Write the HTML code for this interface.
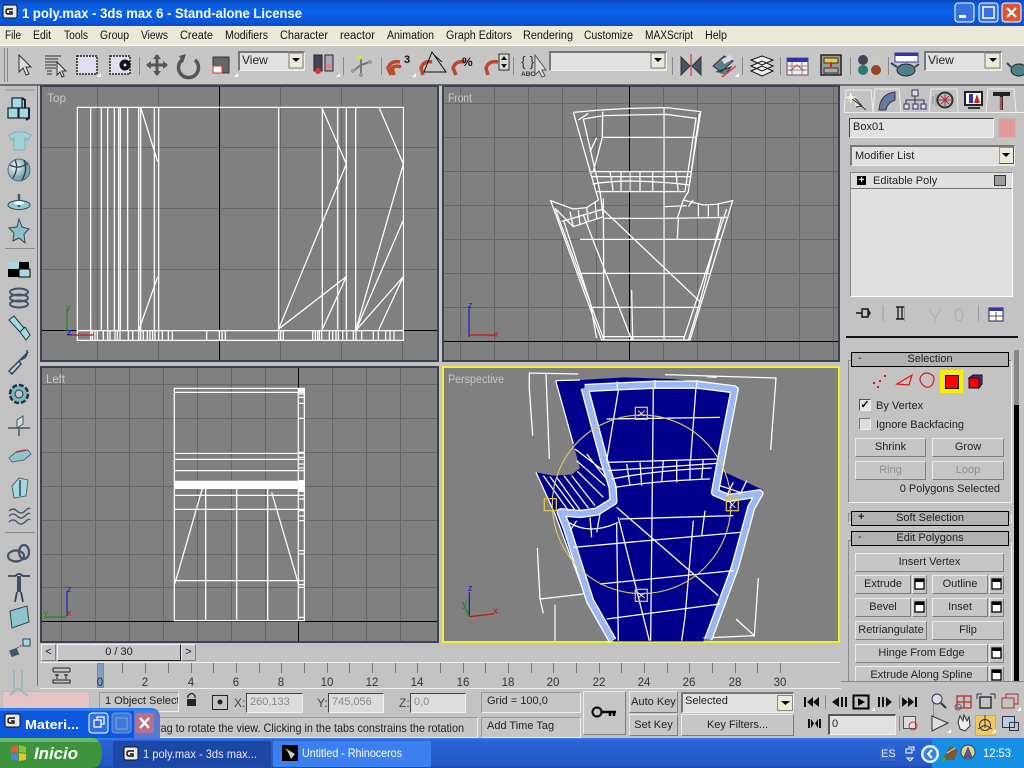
<!DOCTYPE html>
<html><head><meta charset="utf-8"><title>1 poly.max - 3ds max 6</title>
<style>
html,body{margin:0;padding:0;background:#c4c4c4}
#p{position:relative;width:1024px;height:768px;overflow:hidden;background:#c3c3c3;font-family:"Liberation Sans",sans-serif;font-size:11px;color:#111}
#p>div{position:absolute;box-sizing:border-box}
#p>svg{position:absolute;left:0;top:0}
text{font-family:"Liberation Sans",sans-serif}
.b{background:#c6c6c6;border:1px solid;border-color:#ececec #7e7e7e #7e7e7e #ececec;text-align:center;white-space:nowrap;overflow:hidden;line-height:16px;font-size:11px;color:#222}
.d{color:#8d8d8d}
.i{background:#e1e1e1;border:1px solid;border-color:#444 #f2f2f2 #f2f2f2 #444;white-space:nowrap;overflow:hidden;line-height:17px;padding-left:3px;color:#222}
.n{background:#dcdcdc;color:#8a8a8a}
.v{background:#808080;border:2px solid #3d4250}
.r{background:#b2b2b2;border:1px solid #000;text-align:center;line-height:13px;font-size:11px;color:#222}
.g{border:1px solid #8b8b8b;border-right-color:#eee;border-bottom-color:#eee}
.o{background:#c6c6c6;border:1px solid;border-color:#999 #eee #eee #999;line-height:17px;padding-left:5px;white-space:nowrap;overflow:hidden;color:#222;font-size:11px}
.w{fill:none;stroke:#fff;stroke-width:3.8}
.m{font-size:11.5px;fill:#111}
.tl{font-size:13px;fill:#444}
</style></head><body><div id="p">

<div style="left:0;top:0;width:1024px;height:26px;background:linear-gradient(#0a47b8 0,#0a5ce0 5px,#0a63ea 12px,#0a55d8 22px,#0a4cc4 26px)"></div>
<div style="left:0;top:26px;width:1024px;height:20px;background:#ece9d8"></div>
<div style="left:0;top:45px;width:1024px;height:1px;background:#fff"></div>
<div style="left:0;top:46px;width:1024px;height:38px;background:#c6c6c6"></div>
<div style="left:0;top:84px;width:1024px;height:2px;background:#6d6d70"></div>
<div style="left:0;top:86px;width:38px;height:600px;background:#c2c2c2;border-right:1px solid #777"></div>

<div class="v" style="left:40px;top:85px;width:399px;height:277px"></div>
<div class="v" style="left:442px;top:85px;width:398px;height:277px"></div>
<div class="v" style="left:40px;top:366px;width:399px;height:277px"></div>
<div class="v" style="left:442px;top:366px;width:398px;height:277px;border-color:#f5ee2c"></div>

<svg width="1024" height="768" viewBox="0 0 1024 768">
<!-- grids -->
<g stroke="#656565" stroke-width="1" fill="none">
<path d="M97.5 87V360M158.5 87V360M280.5 87V360M341.5 87V360M402.5 87V360M42 147.5H437M42 208.5H437M42 269.5H437"/>
<path d="M460.5 87V360M494.5 87V360M528.5 87V360M562.5 87V360M596.5 87V360M663.5 87V360M697.5 87V360M731.5 87V360M765.5 87V360M799.5 87V360M833.5 87V360M444 103.5H838M444 137.5H838M444 171.5H838M444 205.5H838M444 239.5H838M444 273.5H838M444 307.5H838"/>
<path d="M61.5 368V641M95.5 368V641M129.5 368V641M163.5 368V641M197.5 368V641M231.5 368V641M265.5 368V641M332.5 368V641M366.5 368V641M400.5 368V641M42 384.5H437M42 418.5H437M42 452.5H437M42 486.5H437M42 520.5H437M42 554.5H437M42 587.5H437"/>
</g>
<g stroke="#000" stroke-width="1" fill="none">
<path d="M219.5 87V360M42 330.5H437M629.5 87V360M444 341.5H838M298.5 368V641M42 621.5H437"/>
</g>

<!-- TOP -->
<g transform="translate(40,85) scale(.33333)" class="w">
<path d="M112 67H1090V766H112ZM112 737H1090"/>
<path d="M152 67V766M184 67V737M203 67V737M223 67V737M236 67V737M241 67V737M263 67V737M296 67V737M302 67V737M343 67V737M356 67V737M716 67V737M847 67V737M893 67V737M919 67V737M947 67V737"/>
<path d="M157 737V766M165 737V766M172 737V766M190 737V766M203 737V766M210 737V766M225 737V766M232 737V766M240 737V766M265 737V766M278 737V766M296 737V766M302 737V766M310 737V766M322 737V766M330 737V766M338 737V766M345 737V766M356 737V766M367 737V766M385 737V766M397 737V766M500 737V766M538 737V766M546 737V766M556 737V766M716 737V766M722 737V766M730 737V766M818 737V766M826 737V766M833 737V766M838 737V766M845 737V766M868 737V766M878 737V766M888 737V766M895 737V766M908 737V766M920 737V766M940 737V766M948 737V766M965 737V766M1000 737V766M1015 737V766M1037 737V766M1050 737V766M1062 737V766"/>
<path d="M302 67L353 230M296 737L353 575M845 67L919 237L716 732L919 575M845 737L919 575M1017 67L1090 237L947 737L1090 405M947 737L1090 575M1015 737L1090 575"/>
</g>
<g font-size="12">
<path d="M67 332V309" stroke="#1c8a1c" stroke-width="1.2"/><path d="M67 335H94" stroke="#c01818" stroke-width="1.2"/>
<text x="66" y="310" fill="#1c8a1c" font-size="9">y</text><text x="67" y="335" fill="#2020c0" font-size="9" font-weight="bold">z</text>
</g>

<!-- FRONT -->
<g transform="translate(440,85) scale(.33333)" class="w">
<path d="M400 82L480 75L570 70L680 68L782 80L745 320L730 345L790 360L830 358L878 347L750 765H485L332 347L400 372L440 368L475 345L400 82"/>
<path d="M430 102L490 92L570 90L680 88L768 100L735 320M430 102L480 320L490 395M778 85L750 290M415 105L445 85M488 80L487 157L460 260M450 200L470 158"/>
<path d="M487 157H770M447 260H753M455 275H750M458 297Q570 278 750 300M470 320H735"/>
<path d="M510 260L520 320M543 260V320M570 260V320M600 260V320M638 260V320M672 260V320M707 260L715 320"/>
<path d="M345 370L400 425L490 395M365 410L490 372M390 380L400 425M415 375L420 420M440 365L445 410M465 350L470 400M730 345L712 400M745 365L760 345M775 358V395M805 362V395M835 355V395"/>
<path d="M345 370L490 760M370 405L450 650L470 760M860 372L730 765M845 395L780 650L745 765"/>
<path d="M490 400H570L675 400L865 397M675 365L740 362M420 463H840M410 565H808M455 667H780M490 755H735"/>
<path d="M490 340L492 765M672 70V765M575 615L578 765M485 370L780 650M430 390L575 765M715 400L712 463"/>
</g>
<path d="M469 337V306" stroke="#2020c0" stroke-width="1.2"/><path d="M469 335H495" stroke="#c01818" stroke-width="1.2"/>
<text x="468" y="308" fill="#2020c0" font-size="9">z</text><text x="494" y="337" fill="#c01818" font-size="9">x</text>

<!-- LEFT -->
<g transform="translate(40,364) scale(.33333)" class="w">
<path d="M403 73H793V770H403ZM403 85H793M403 268H793M403 286H793M403 320H793M403 352H793M403 360H793M403 394H793M403 436H793M403 650H793"/>
<path d="M775 73V770M497 352V770M590 352V770M683 352V770"/>
<path d="M488 370L405 658M695 385L775 658"/>
<path d="M775 90H793M775 100H793M775 118H793M775 163H793M775 265H793M775 280H793M775 300H793M775 312H793M775 405H793M775 440H793M775 456H793M775 470H793M775 560H793M775 570H793M775 662H793M775 670H793M775 760H793"/>
</g>
<rect x="174" y="481" width="131" height="8" fill="#fff"/>
<rect x="298" y="388" width="7" height="5" fill="#fff"/><rect x="298" y="480" width="7" height="12" fill="#fff"/>
<path d="M67 616V591" stroke="#2020c0" stroke-width="1.2"/><path d="M67 617H44" stroke="#1c8a1c" stroke-width="1.2"/>
<text x="67" y="592" fill="#2020c0" font-size="9">z</text><text x="44" y="616" fill="#1c8a1c" font-size="9">y</text><text x="67" y="616" fill="#c01818" font-size="9">x</text>

<!-- PERSPECTIVE -->
<g transform="translate(440,364) scale(.33333)">
<path d="M347 50L420 48L555 40L695 45L895 65L870 135L840 318L970 378L930 430L835 720L790 832H520L430 680L345 450L288 325L340 335L395 332L420 312L400 240Z" fill="#00008c"/>
<g class="w">
<path d="M268 75V27L415 30M268 75L278 215M318 30L328 285M675 32L1008 42L992 258M800 38L830 40M292 552L300 705L430 690M300 705L310 748M345 722V830M955 642L943 815L888 765M943 815L790 822"/>
<path d="M347 50L400 240M347 50L420 48"/>
<path d="M288 325L345 450L430 680"/>
</g>
<g fill="none" stroke-linejoin="round">
<path id="band" d="M434 72L560 66L645 62L770 62L884 76L852 240L825 385L865 402L958 388L934 430L885 610L805 825M434 72L495 300L518 370L520 412L470 443L420 450L362 445L380 490L450 710L518 830" stroke="#fff" stroke-width="25"/>
<path d="M434 72L560 66L645 62L770 62L884 76L852 240L825 385L865 402L958 388L934 430L885 610L805 825M434 72L495 300L518 370L520 412L470 443L420 450L362 445L380 490L450 710L518 830" stroke="#9cb8f2" stroke-width="17"/>
</g>
<g class="w">
<path d="M532 52V80M645 48V75M770 48V73"/>
<path d="M535 80L500 290M640 75L632 830M768 70L752 285M500 165L840 160M500 295L830 285M505 320L830 298M515 345Q640 320 815 312M525 370Q650 350 810 345M560 300L570 365M600 295L605 365M670 290L665 355M710 290V355M750 285V350M790 285L785 345"/>
<path d="M310 335L385 440M330 338L405 438M350 340L420 438M372 335L445 432M395 335L465 425M412 322L490 400M405 255L490 320M410 290L495 365M440 270L495 340M840 365L900 385M880 355L860 395M920 350L900 392"/>
<path d="M540 465L880 455M385 475Q450 515 535 475M400 550L900 505M480 660L880 620M500 765L840 720M390 500L410 470M450 460L455 520M480 450L470 505M530 430L835 695M535 460L628 830M760 470L735 760L725 830M530 480L535 830M795 440L785 515"/>
</g>
<circle cx="605" cy="421" r="268" fill="none" stroke="#d8c868" stroke-width="3.5"/>
<g fill="none" stroke="#d8c050" stroke-width="4">
<rect x="586" y="130" width="36" height="36"/><rect x="586" y="676" width="36" height="36"/><rect x="313" y="404" width="36" height="36"/><rect x="859" y="404" width="36" height="36"/>
</g>
<path d="M594 140L614 156M614 140L594 156M594 686L614 702M614 686L594 702M868 412L886 432M886 412L868 432" stroke="#fff" stroke-width="2.5"/>
<path d="M88 758V685" stroke="#2020c0" stroke-width="4"/><path d="M88 758L160 750" stroke="#c01818" stroke-width="4"/><path d="M88 758L68 715" stroke="#1c8a1c" stroke-width="4"/>
</g>
<text x="468" y="591" fill="#2020c0" font-size="9">z</text><text x="462" y="607" fill="#1c8a1c" font-size="10">y</text><text x="493" y="614" fill="#c01818" font-size="10">x</text>

<!-- viewport labels -->
<g font-size="11.5" fill="#c6c6c6">
<text x="47" y="102" textLength="19" lengthAdjust="spacingAndGlyphs">Top</text>
<text x="448" y="102" textLength="24" lengthAdjust="spacingAndGlyphs">Front</text>
<text x="46" y="383" textLength="19" lengthAdjust="spacingAndGlyphs">Left</text>
<text x="448" y="383" textLength="56" lengthAdjust="spacingAndGlyphs">Perspective</text>
</g>

<!-- title -->
<g>
<rect x="3" y="5" width="14" height="13" rx="2" fill="#e8e8e8" stroke="#111"/><path d="M13 9H8Q6 9 6 11.5T8 14H12V12H9" fill="none" stroke="#111" stroke-width="1.4"/>
<text x="22" y="18" fill="#fff" font-weight="bold" font-size="13.5" textLength="280" lengthAdjust="spacingAndGlyphs">1 poly.max - 3ds max 6 - Stand-alone License</text>
<rect x="955" y="3" width="19" height="19" rx="3" fill="#3a6fe0" stroke="#fff"/><rect x="959" y="15" width="7" height="3" fill="#fff"/>
<rect x="979" y="3" width="19" height="19" rx="3" fill="#3a6fe0" stroke="#fff"/><rect x="983" y="7" width="11" height="11" fill="none" stroke="#fff" stroke-width="1.5"/>
<rect x="1002" y="3" width="19" height="19" rx="3" fill="#dd5533" stroke="#fff"/><path d="M1007 8L1016 17M1016 8L1007 17" stroke="#fff" stroke-width="2.2"/>
</g>
<!-- menu -->
<g class="x">
<text class="m" x="5" y="39" textLength="16" lengthAdjust="spacingAndGlyphs">File</text>
<text class="m" x="33" y="39" textLength="18" lengthAdjust="spacingAndGlyphs">Edit</text>
<text class="m" x="64" y="39" textLength="24" lengthAdjust="spacingAndGlyphs">Tools</text>
<text class="m" x="100" y="39" textLength="29" lengthAdjust="spacingAndGlyphs">Group</text>
<text class="m" x="141" y="39" textLength="27" lengthAdjust="spacingAndGlyphs">Views</text>
<text class="m" x="180" y="39" textLength="33" lengthAdjust="spacingAndGlyphs">Create</text>
<text class="m" x="225" y="39" textLength="43" lengthAdjust="spacingAndGlyphs">Modifiers</text>
<text class="m" x="280" y="39" textLength="48" lengthAdjust="spacingAndGlyphs">Character</text>
<text class="m" x="340" y="39" textLength="35" lengthAdjust="spacingAndGlyphs">reactor</text>
<text class="m" x="387" y="39" textLength="47" lengthAdjust="spacingAndGlyphs">Animation</text>
<text class="m" x="446" y="39" textLength="66" lengthAdjust="spacingAndGlyphs">Graph Editors</text>
<text class="m" x="523" y="39" textLength="50" lengthAdjust="spacingAndGlyphs">Rendering</text>
<text class="m" x="584" y="39" textLength="49" lengthAdjust="spacingAndGlyphs">Customize</text>
<text class="m" x="645" y="39" textLength="48" lengthAdjust="spacingAndGlyphs">MAXScript</text>
<text class="m" x="705" y="39" textLength="22" lengthAdjust="spacingAndGlyphs">Help</text>
</g>
</svg>

<!-- Right panel -->
<div style="left:841px;top:86px;width:183px;height:600px;background:#c3c3c3"></div>
<div style="left:844px;top:112px;width:180px;height:1px;background:#eee"></div>
<div class="i" style="left:849px;top:118px;width:145px;height:20px">Box01</div>
<div style="left:998px;top:118px;width:18px;height:20px;background:#e59a9a;border:1px solid #bbb"></div>
<div class="i" style="left:850px;top:145px;width:165px;height:21px;padding-left:3px;line-height:18px;border-width:2px 1px 1px 2px;border-color:#777 #eee #eee #777">Modifier List</div>
<div style="left:999px;top:147px;width:15px;height:17px;background:#ece9d8;border:1px solid #999;border-right-color:#555;border-bottom-color:#555"></div>
<div style="left:850px;top:172px;width:163px;height:125px;background:#e0e0e0;border:1px solid;border-color:#888 #fff #fff #888"></div>
<div style="left:851px;top:188px;width:161px;height:1px;background:#777"></div>
<div style="left:873px;top:173px;height:15px;line-height:16px;font-size:11px;color:#222">Editable Poly</div>
<div style="left:994px;top:175px;width:12px;height:11px;background:#9c9c9c;border:1px solid #333"></div>
<div style="left:857px;top:176px;width:9px;height:9px;background:#000;color:#fff;font:bold 10px/9px 'Liberation Sans';text-align:center">+</div>
<div style="left:846px;top:336px;width:172px;height:2px;background:#111"></div>

<!-- rollouts -->
<div style="left:1014px;top:350px;width:5px;height:55px;background:#888"></div>
<div style="left:1014px;top:405px;width:5px;height:276px;background:#000"></div>
<div class="g" style="left:848px;top:360px;width:164px;height:143px"></div>
<div class="r" style="left:851px;top:352px;width:158px;height:15px"><span style="position:absolute;left:6px;top:-1px">-</span>Selection</div>
<div style="left:940px;top:370px;width:23px;height:23px;background:#f8f000"></div>
<div style="left:945px;top:375px;width:14px;height:14px;background:#f00;border:1px solid #000"></div>
<div style="left:859px;top:399px;width:12px;height:12px;background:#e4e4e4;border:1px solid;border-color:#555 #eee #eee #555;font:bold 11px/10px 'Liberation Sans';text-align:center;color:#000">&#10003;</div>
<div style="left:876px;top:399px;line-height:14px;color:#222">By Vertex</div>
<div style="left:859px;top:418px;width:12px;height:12px;background:#dcdcdc;border:1px solid;border-color:#777 #eee #eee #777"></div>
<div style="left:876px;top:418px;line-height:14px;color:#222">Ignore Backfacing</div>
<div class="b" style="left:855px;top:438px;width:71px;height:19px">Shrink</div>
<div class="b" style="left:932px;top:438px;width:72px;height:19px">Grow</div>
<div class="b d" style="left:855px;top:461px;width:71px;height:19px">Ring</div>
<div class="b d" style="left:932px;top:461px;width:72px;height:19px">Loop</div>
<div style="left:860px;top:482px;width:140px;text-align:right;line-height:14px;color:#222">0 Polygons Selected</div>
<div class="g" style="left:848px;top:513px;width:164px;height:10px"></div>
<div class="r" style="left:851px;top:511px;width:158px;height:15px"><span style="position:absolute;left:6px;top:-1px;font-weight:bold">+</span>Soft Selection</div>
<div class="g" style="left:848px;top:540px;width:164px;height:146px;border-bottom:0"></div>
<div class="r" style="left:851px;top:531px;width:158px;height:15px"><span style="position:absolute;left:6px;top:-1px">-</span>Edit Polygons</div>
<div class="b" style="left:855px;top:553px;width:149px;height:19px">Insert Vertex</div>
<div class="b" style="left:855px;top:575px;width:56px;height:19px">Extrude</div>
<div class="b" style="left:912px;top:575px;width:15px;height:19px"></div>
<div class="b" style="left:932px;top:575px;width:56px;height:19px">Outline</div>
<div class="b" style="left:989px;top:575px;width:15px;height:19px"></div>
<div class="b" style="left:855px;top:598px;width:56px;height:19px">Bevel</div>
<div class="b" style="left:912px;top:598px;width:15px;height:19px"></div>
<div class="b" style="left:932px;top:598px;width:56px;height:19px">Inset</div>
<div class="b" style="left:989px;top:598px;width:15px;height:19px"></div>
<div class="b" style="left:855px;top:621px;width:72px;height:19px">Retriangulate</div>
<div class="b" style="left:932px;top:621px;width:72px;height:19px">Flip</div>
<div class="b" style="left:855px;top:644px;width:133px;height:19px">Hinge From Edge</div>
<div class="b" style="left:989px;top:644px;width:15px;height:19px"></div>
<div class="b" style="left:855px;top:666px;width:133px;height:19px">Extrude Along Spline</div>
<div class="b" style="left:989px;top:666px;width:15px;height:19px"></div>
<div style="left:841px;top:681px;width:183px;height:8px;background:#c3c3c3;border-top:1px solid #888"></div>

<!-- toolbar dropdowns -->
<div class="i" style="left:238px;top:51px;width:67px;height:20px;border-width:2px 1px 1px 2px;border-color:#777 #eee #eee #777;line-height:15px;padding-left:2px;font-size:12px">View</div>
<div class="i" style="left:549px;top:51px;width:118px;height:20px;border-width:2px 1px 1px 2px;border-color:#777 #eee #eee #777"></div>
<div class="i" style="left:924px;top:51px;width:78px;height:20px;border-width:2px 1px 1px 2px;border-color:#777 #eee #eee #777;line-height:15px;padding-left:2px;font-size:12px">View</div>

<!-- time slider -->
<div class="b" style="left:41px;top:644px;width:15px;height:17px;line-height:14px">&lt;</div>
<div class="b" style="left:57px;top:644px;width:124px;height:17px;line-height:15px;border-color:#eee #222 #222 #eee">0 / 30</div>
<div class="b" style="left:181px;top:644px;width:15px;height:17px;line-height:14px">&gt;</div>
<div style="left:40px;top:662px;width:800px;height:1px;background:#eee"></div>
<div style="left:97px;top:663px;width:7px;height:25px;background:#7f9fc4;border:1px solid #888"></div>
<div style="left:40px;top:688px;width:801px;height:1px;background:#eee"></div>

<!-- status -->
<div style="left:2px;top:691px;width:88px;height:20px;background:#e4c4c4;border:1px solid #bbb"></div>
<div class="o" style="left:99px;top:692px;width:80px;height:20px">1 Object Selected</div>
<div class="i n" style="left:246px;top:693px;width:57px;height:20px">260,133</div>
<div class="i n" style="left:328px;top:693px;width:56px;height:20px">745,056</div>
<div class="i n" style="left:410px;top:693px;width:56px;height:20px">0,0</div>
<div class="o" style="left:481px;top:692px;width:100px;height:21px">Grid = 100,0</div>
<div class="o" style="left:99px;top:717px;width:379px;height:21px"></div>
<div class="o" style="left:481px;top:717px;width:100px;height:21px">Add Time Tag</div>
<div class="b" style="left:583px;top:691px;width:43px;height:44px"></div>
<div class="b" style="left:629px;top:691px;width:49px;height:22px;line-height:20px;padding:0">Auto Key</div>
<div class="b" style="left:629px;top:714px;width:49px;height:22px;line-height:20px">Set Key</div>
<div class="i" style="left:681px;top:692px;width:113px;height:21px;border-width:2px 1px 1px 2px;border-color:#777 #eee #eee #777;line-height:15px;padding-left:2px">Selected</div>
<div style="left:777px;top:695px;width:16px;height:16px;background:#ece9d8;border:1px solid #888"></div>
<div class="b" style="left:681px;top:714px;width:113px;height:22px;line-height:20px">Key Filters...</div>
<div class="i" style="left:828px;top:714px;width:68px;height:21px;border-width:2px 1px 1px 2px;border-color:#555 #eee #eee #555;line-height:17px;padding-left:2px">0</div>
<div style="left:975px;top:715px;width:21px;height:21px;background:#f0c860;border:1px solid #aaa"></div>

<!-- icons overlay -->
<svg width="1024" height="768" viewBox="0 0 1024 768">
<defs>
<linearGradient id="tb" x1="0" x2="0" y1="0" y2="1"><stop offset="0" stop-color="#3a7cf0"/><stop offset=".1" stop-color="#2a62d4"/><stop offset=".9" stop-color="#2457c4"/><stop offset="1" stop-color="#1e49a8"/></linearGradient>
<radialGradient id="ball" cx=".35" cy=".35"><stop offset="0" stop-color="#fff"/><stop offset="1" stop-color="#79a8b0"/></radialGradient>
</defs>
<!-- toolbar grips & separators -->
<path d="M4.5 48V82M7.5 48V82" stroke="#888"/>
<path d="M139.5 57V75M343.5 57V75M381.5 57V75M513.5 57V75M672.5 57V75M742.5 57V75M780.5 57V75M850.5 57V75M888.5 57V75" stroke="#888"/>
<!-- cursor -->
<path d="M19 55V72L23 68L26 75L29 74L26 67H31Z" fill="#ddd" stroke="#333"/>
<path d="M45 56H61M45 59H58M45 62H58M45 65H56M45 68H56M47 71H52M47 74H52" stroke="#333"/><path d="M57 62V75L60 72L62 77L64 76L62 71H66Z" fill="#ddd" stroke="#333"/>
<rect x="77" y="56" width="20" height="18" fill="#dfdff0" stroke="#222" stroke-dasharray="2 1" stroke-width="1.5"/>
<rect x="110" y="56" width="20" height="18" fill="#dfdff0" stroke="#222" stroke-dasharray="2 1" stroke-width="1.5"/><circle cx="125" cy="65" r="5.5" fill="#111"/><circle cx="125" cy="65" r="1.5" fill="#ddd"/>
<path d="M157 55V75M147 65H167" stroke="#555" stroke-width="3"/><path d="M157 54L153 59H161ZM157 76L153 71H161ZM146 65L151 61V69ZM168 65L163 61V69Z" fill="#555"/>
<path d="M195 60A10 10 0 1 1 182 60" fill="none" stroke="#555" stroke-width="3.5"/><path d="M186 54L179 56L183 63Z" fill="#555"/>
<rect x="213" y="57" width="16" height="16" fill="#666" stroke="#333"/><rect x="213" y="66" width="9" height="7" fill="#fff" stroke="#c33"/>
<rect x="314" y="55" width="8" height="16" fill="#445" stroke="#222"/><rect x="325" y="55" width="8" height="16" fill="#aab" stroke="#222"/><circle cx="318" cy="71" r="3" fill="#d33"/><circle cx="329" cy="66" r="3" fill="#d88"/>
<path d="M361 65V58M361 65L353 71M361 65L370 62M361 65L361 75" stroke="#777" stroke-width="2"/><circle cx="360" cy="57" r="2.5" fill="#dd4"/><circle cx="353" cy="71" r="2" fill="#999"/><circle cx="370" cy="62" r="2" fill="#999"/><circle cx="361" cy="75" r="2" fill="#999"/>
<g fill="none" stroke="#b84a30" stroke-width="3.5"><path d="M391 75L388 68Q391 60 400 62"/><path d="M394 75L392 68Q396 65 401 67"/><path d="M423 75L421 68Q424 60 432 62"/><path d="M456 75L453 68Q456 60 465 62"/><path d="M488 75L486 68Q489 60 498 62"/></g>
<text x="404" y="63" font-weight="bold" font-size="11" fill="#111">3</text>
<path d="M424 72L432 52L446 72ZM434 55L442 62" fill="none" stroke="#111"/>
<text x="462" y="66" font-weight="bold" font-size="12" fill="#111">%</text>
<rect x="499" y="54" width="10" height="16" fill="#ddd" stroke="#333"/><path d="M504 56L501 60H507ZM504 68L501 64H507Z" fill="#111"/>
<text x="521" y="66" font-size="14" fill="#333">{ }</text><text x="521" y="76" font-size="6.5" font-weight="bold" fill="#333">ABC</text><path d="M535 55V75L539 71L542 77L545 76L542 70H546Z" fill="#ddd" stroke="#555"/>
<path d="M681 57L690 66L681 75ZM701 57L692 66L701 75Z" fill="#445566" stroke="#333"/><path d="M691 54V76" stroke="#c55" stroke-width="1.5"/>
<path d="M713 66L724 56L733 61L721 72ZM716 72L731 67L725 75" fill="#5a7f88" stroke="#333"/><path d="M722 77L736 66" stroke="#d44" stroke-width="1.5"/><rect x="722" y="57" width="10" height="5" fill="#ddd" transform="rotate(-30 727 59)"/>
<path d="M751 60L762 56L773 60L762 65ZM751 66L762 61L773 66L762 71ZM751 71L762 66L773 71L762 76Z" fill="#eee" stroke="#111"/>
<rect x="787" y="58" width="21" height="17" fill="#f0f0f0" stroke="#556"/><rect x="787" y="58" width="21" height="4" fill="#33a"/><path d="M792 62V75M802 62V75M787 66H808M787 70H808" stroke="#888"/><path d="M790 71L797 65L804 71" stroke="#c44" fill="none"/>
<rect x="821" y="55" width="20" height="20" fill="#999" stroke="#222" stroke-width="1.5"/><rect x="824" y="58" width="14" height="5" fill="#e8cc30" stroke="#333"/><rect x="824" y="68" width="14" height="5" fill="#aaa" stroke="#333"/><path d="M831 62V67" stroke="#c22" stroke-width="2"/>
<circle cx="863" cy="60" r="5" fill="#445"/><circle cx="876" cy="60" r="5" fill="#ccc"/><circle cx="863" cy="70" r="5" fill="#2a7a70"/><circle cx="876" cy="70" r="5" fill="#942"/>
<rect x="895" y="53" width="23" height="9" fill="#fff" stroke="#33a"/><rect x="895" y="53" width="23" height="3" fill="#33a"/><ellipse cx="906" cy="70" rx="9" ry="6" fill="#4f7f8a" stroke="#222"/><path d="M897 67L891 63M915 67L919 64" stroke="#345" stroke-width="2"/>
<ellipse cx="1019" cy="70" rx="8" ry="6" fill="#4f7f8a" stroke="#222"/><path d="M1011 67L1007 63" stroke="#345" stroke-width="2"/>
<!-- dropdown arrows -->
<g>
<rect x="289" y="53" width="14" height="15" fill="#ece9d8" stroke="#777"/><path d="M292 58H300L296 62Z" fill="#000"/>
<rect x="651" y="53" width="14" height="15" fill="#ece9d8" stroke="#777"/><path d="M654 58H662L658 62Z" fill="#000"/>
<rect x="985" y="53" width="15" height="15" fill="#ece9d8" stroke="#777"/><path d="M989 58H997L993 62Z" fill="#000"/>
<path d="M1002 153H1010L1006 157Z" fill="#000"/>
<path d="M781 701H790L785.500 705Z" fill="#000"/>
</g>
<!-- small corner flyout marks -->
<path d="M97 77H101V73ZM234 77H238V73ZM336 77H340V73ZM412 77H416V73ZM735 77H739V73Z" fill="#fff"/>

<!-- left toolbar -->
<path d="M5 90H35M5 248.500H35M5 532.500H35" stroke="#888"/>
<g stroke="#123" stroke-width="1.2">
<rect x="12" y="98" width="10" height="10" fill="#a5dbe0"/><rect x="8" y="108" width="10" height="10" fill="#a5dbe0"/><rect x="19" y="108" width="10" height="10" fill="#a5dbe0"/>
<path d="M22 98L25 100V108M29 108V118L26 120" fill="none" stroke-width="2"/>
</g>
<path d="M9 135L15 132H24L31 135L28 140L25 138V150H14V138L11 140Z" fill="#a0d2d8" stroke="#8ab"/>
<circle cx="19" cy="170" r="11" fill="url(#ball)" stroke="#667"/><path d="M10 165Q19 170 28 163M13 178Q19 168 15 160M22 180Q28 170 24 160" fill="none" stroke="#345" stroke-width="1.4"/>
<ellipse cx="19" cy="205" rx="11" ry="4.500" fill="#8fcad2" stroke="#345"/><path d="M19 194V207" stroke="#456" stroke-width="2.500"/><ellipse cx="19" cy="203" rx="5" ry="2" fill="#dff"/>
<path d="M19 219L22 227L29 229L24 234L25 243L19 238L13 241L14 233L9 228L17 227Z" fill="#8cc0c8" stroke="#345"/>
<rect x="9" y="262" width="20" height="15" fill="#a5dbe0"/><rect x="9" y="262" width="10" height="7" fill="#a5dbe0"/><rect x="19" y="262" width="10" height="7" fill="#000"/><rect x="8" y="269" width="11" height="8" fill="#000"/><rect x="19" y="269" width="11" height="8" fill="#a5dbe0" stroke="#000"/>
<g fill="none" stroke="#456" stroke-width="2"><ellipse cx="19" cy="292" rx="9" ry="3.500"/><ellipse cx="19" cy="298" rx="9" ry="3.500"/><ellipse cx="19" cy="304" rx="9" ry="3.500"/></g>
<path d="M9 320L14 316L24 328L20 332ZM20 332L25 327L30 335L26 340Z" fill="#a5dbe0" stroke="#234"/>
<path d="M9 371L19 361L21 364L12 374ZM19 361L28 352M20 360Q28 358 27 350" fill="#a5dbe0" stroke="#345" stroke-width="1.500"/>
<circle cx="19" cy="394" r="9" fill="#7fb8c2" stroke="#234" stroke-width="2.500" stroke-dasharray="5 2"/><circle cx="19" cy="394" r="4" fill="#c3c3c3" stroke="#234"/>
<path d="M8 428H30M19 428V436" stroke="#456" stroke-width="1.500"/><path d="M17 428V420L23 416V424Z" fill="#ddd" stroke="#456"/>
<path d="M9 458L16 452L28 450L31 454L24 460L12 462Z" fill="#8fc4cc" stroke="#667"/><path d="M16 452L26 450" stroke="#a33" stroke-width="1.500"/>
<path d="M12 486L19 478L28 480L26 496L14 498Z" fill="#a5dbe0" stroke="#567"/><path d="M20 480V496" stroke="#345" stroke-width="1.500"/>
<g fill="none" stroke="#456" stroke-width="1.300"><path d="M9 511Q13 507 17 511T25 511T30 509M9 516Q13 512 17 516T25 516T30 514M9 522Q13 518 17 522T25 522T30 520"/></g>
<g fill="none" stroke="#456" stroke-width="2.200"><ellipse cx="16" cy="556" rx="8" ry="5.500"/><ellipse cx="24" cy="552" rx="5" ry="7"/></g>
<path d="M8 576H15L18 574L20 574L23 576H30M18 576V592M20 576V592M17 592L15 602M21 592L23 602" fill="none" stroke="#345" stroke-width="1.800"/>
<path d="M10 611L27 606L29 622L12 628Z" fill="#8ec4cc" stroke="#345"/>
<rect x="10" y="649" width="8" height="7" fill="#456" transform="rotate(-20 14 652)"/><rect x="23" y="639" width="7" height="7" fill="#a5dbe0" stroke="#345"/><path d="M17 648L24 644" stroke="#555" stroke-dasharray="2 1"/>
<path d="M14 670V690M22 670V690M10 695L18 688L28 696" fill="none" stroke="#9bb" stroke-width="2"/>
<!-- track bar icon -->
<rect x="53" y="668" width="17" height="4" rx="1" fill="none" stroke="#222"/><rect x="53" y="680" width="17" height="3" fill="none" stroke="#222"/><path d="M57 679V674M66 679V674M55 675H59M64 675H68" stroke="#222"/>
<!-- timeline ticks -->
<g stroke="#777">
<path d="M122.500 663V673M145.500 663V673M168.500 663V673M191.500 663V673M213.500 663V673M236.500 663V673M259.500 663V673M281.500 663V673M304.500 663V673M327.500 663V673M349.500 663V673M372.500 663V673M395.500 663V673M417.500 663V673M440.500 663V673M463.500 663V673M485.500 663V673M508.500 663V673M531.500 663V673M553.500 663V673M576.500 663V673M599.500 663V673M621.500 663V673M644.500 663V673M667.500 663V673M689.500 663V673M712.500 663V673M735.500 663V673M757.500 663V673M780.500 663V673"/>
</g>
<g font-size="11.500" fill="#333" text-anchor="middle">
<text x="100" y="686">0</text><text x="145" y="686">2</text><text x="191" y="686">4</text><text x="236" y="686">6</text><text x="281" y="686">8</text><text x="327" y="686">10</text><text x="372" y="686">12</text><text x="417" y="686">14</text><text x="463" y="686">16</text><text x="508" y="686">18</text><text x="553" y="686">20</text><text x="599" y="686">22</text><text x="644" y="686">24</text><text x="689" y="686">26</text><text x="735" y="686">28</text><text x="780" y="686">30</text>
</g>
<!-- status icons -->
<path d="M188 698V696Q192 691 195 696V698" fill="none" stroke="#222" stroke-width="1.300"/><rect x="187" y="699" width="9" height="7" fill="#222"/>
<rect x="212.500" y="695.500" width="15" height="14" fill="none" stroke="#222"/><circle cx="220" cy="702" r="2.500" fill="#222"/>
<g fill="#444" font-size="12"><text x="234" y="707">X:</text><text x="317" y="707">Y:</text><text x="399" y="707">Z:</text></g>
<!-- key icon -->
<circle cx="597" cy="712" r="4.500" fill="none" stroke="#000" stroke-width="2"/><path d="M602 712H616M610 712V716M614 712V716" stroke="#000" stroke-width="2.500"/>
<!-- playback -->
<g fill="#111">
<path d="M804 697H806V707H804ZM813 697V707L807 702ZM819 697V707L813 702Z"/>
<path d="M839 697V707L832 702ZM841 697H843V707H841ZM845 697H847V707H845Z"/>
<path d="M878 697H880V707H878ZM882 697H884V707H882ZM886 697L892 702L886 707Z"/>
<path d="M902 697L908 702L902 707ZM908 697L914 702L908 707ZM915 697H917V707H915Z"/>
<path d="M808 719H810V728H808ZM811 719L814 723.500L811 728ZM818 719V728L815 723.500ZM819 719H821V728H819Z"/>
</g>
<rect x="853.500" y="695.500" width="15" height="13" fill="none" stroke="#000" stroke-width="2"/><path d="M858 698L865 702L858 706Z" fill="#000"/>
<path d="M825.500 695V709M899.500 695V709M933.500 695V731M899.500 716V731" stroke="#888"/>
<rect x="903.500" y="716.500" width="12" height="12" fill="#ddd" stroke="#555"/><circle cx="913" cy="726" r="4" fill="none" stroke="#c33"/>
<!-- nav -->
<circle cx="937" cy="699" r="5" fill="#dde" stroke="#334"/><path d="M941 703L946 708" stroke="#335" stroke-width="2"/>
<path d="M957 696H971V708H957ZM964 696V708M957 702H971" fill="none" stroke="#a33" stroke-width="1.300"/><circle cx="958" cy="707" r="3" fill="none" stroke="#558"/>
<rect x="980" y="697" width="11" height="11" fill="none" stroke="#334" stroke-width="1.500"/><path d="M977 694H982M977 694V699M995 694H990M995 694V699" stroke="#334"/>
<path d="M1002 698H1014V708H1002Z M1006 698V694H1018V704H1014" fill="none" stroke="#a33"/>
<path d="M932 716L948 723L932 731Z" fill="#ddd" stroke="#333"/>
<path d="M958 722L960 716L963 721L964 715L967 721L969 717L970 726L965 731L960 729Z" fill="#eee" stroke="#333"/>
<circle cx="985" cy="725" r="5.500" fill="none" stroke="#334"/><path d="M985 715V728M978 729L985 725L992 729" fill="none" stroke="#334"/>
<rect x="1002.500" y="716.500" width="12" height="11" fill="#bcd" stroke="#335"/><rect x="1009.500" y="722.500" width="9" height="8" fill="none" stroke="#335"/>
<path d="M1017 711H1021V707ZM947 733H951V729ZM992 733H996V729ZM871 711H875V707Z" fill="#fff"/>

<!-- command panel tabs -->
<path d="M844 112L846 90H871L873 112M873 112L875 89H899L901 112M929 112L931 89H957L958 112M986 112L988 89H1014L1016 112" fill="none" stroke="#eee"/>
<path d="M850 97L866 110M853 96L862 106L856 107" stroke="#333" fill="#eee"/><path d="M850 91L852 96L857 97L852 99L851 104L849 99L845 97L850 96Z" fill="#fffbe0"/>
<path d="M879 110Q880 94 895 92V100Q887 103 886 110Z" fill="#6a7a9a" stroke="#335"/>
<rect x="912" y="90" width="6" height="6" fill="#dde" stroke="#335"/><path d="M915 96V100M906 104V100H924V104M915 100V104" stroke="#335" fill="none"/><rect x="904" y="104" width="5" height="5" fill="#dde" stroke="#335"/><rect x="913" y="104" width="5" height="5" fill="#dde" stroke="#335"/><rect x="921" y="104" width="5" height="5" fill="#dde" stroke="#335"/>
<circle cx="945" cy="100" r="7.500" fill="#bbb" stroke="#333" stroke-width="2"/><path d="M945 94V106M939 100H951M941 96L949 104M949 96L941 104" stroke="#a33"/><path d="M933 96V104M936 94V106" stroke="#888"/>
<rect x="965" y="92" width="17" height="13" fill="#fff" stroke="#222" stroke-width="2"/><path d="M969 94H973V103H969Z" fill="#33a"/><path d="M974 103L977 94L980 103Z" fill="#c22"/><path d="M968 108H980" stroke="#333" stroke-width="2"/>
<path d="M993 92H1010V96H1003V110H1000V96H993Z" fill="#222"/><path d="M1001 97V110" stroke="#a54" stroke-width="2.500"/>
<!-- modifier stack icons -->
<path d="M856 313H862M862 309H868V317H862ZM868 310L870 313L868 316" fill="none" stroke="#111" stroke-width="1.400"/><path d="M883 305V321M904.500 305V321M978.500 305V321" stroke="#999"/>
<path d="M896 307H904M898 307V319M902 307V319M896 319H904" stroke="#222" stroke-width="1.400" fill="none"/>
<path d="M929 309L935 318L941 309M935 318V323" stroke="#aaa" fill="none"/><ellipse cx="959" cy="315" rx="4" ry="6" fill="none" stroke="#aaa"/>
<rect x="989" y="308" width="14" height="13" fill="#fff" stroke="#225"/><rect x="989" y="308" width="14" height="3" fill="#33a"/><path d="M996 312V321M989 316H1003" stroke="#555"/>
<!-- sub-object icons -->
<g fill="none" stroke="#e0141c" stroke-width="1.200">
<path d="M922 375Q918 379 922 384Q927 390 932 385Q936 378 932 375Q926 371 922 375"/>
</g>
<path d="M897 384L912 375L909 385Z" fill="none" stroke="#e0141c" stroke-width="1.200"/>
<path d="M873 382h2v2h-2zM877 386h2v2h-2zM879 380h2v2h-2zM884 375h2v2h-2z" fill="#e0141c"/>
<path d="M969 378H979V388H969Z" fill="#f00" stroke="#111"/><path d="M969 378L973 375H982V384L979 388V378Z" fill="#522a80" stroke="#111"/>
<!-- option boxes -->
<g fill="#fff" stroke="#000" stroke-width="1.300"><rect x="915" y="579" width="9" height="10"/><rect x="992" y="579" width="9" height="10"/><rect x="915" y="602" width="9" height="10"/><rect x="992" y="602" width="9" height="10"/><rect x="992" y="648" width="9" height="10"/><rect x="992" y="670" width="9" height="10"/></g>
<path d="M915 579H924V582H915ZM992 579H1001V582H992ZM915 602H924V605H915ZM992 602H1001V605H992ZM992 648H1001V651H992ZM992 670H1001V673H992Z" fill="#000"/>
<text x="157" y="732" font-size="12" fill="#222" textLength="307" lengthAdjust="spacingAndGlyphs">rag to rotate the view.  Clicking in the tabs constrains the rotation</text>

<!-- taskbar -->
<rect x="0" y="738" width="1024" height="30" fill="url(#tb)"/>
<rect x="932" y="739" width="92" height="29" fill="#1590e4"/>
<path d="M0 738H92Q102 738 102 753Q102 768 92 768H0Z" fill="#3d943d"/><path d="M0 738H92Q97 738 99 742H0Z" fill="#69b76a"/>
<g><path d="M11 747L18 745V752L11 753Z" fill="#e85a30"/><path d="M19 745L26 747V753L19 752Z" fill="#8ac23c"/><path d="M11 754L18 753V761L11 759Z" fill="#4a86e8"/><path d="M19 753L26 754V760L19 761Z" fill="#f0c030"/></g>
<text x="34" y="759" font-size="17" font-weight="bold" font-style="italic" fill="#fff" textLength="44" lengthAdjust="spacingAndGlyphs">Inicio</text>
<rect x="113" y="741" width="158" height="26" rx="2" fill="#1c47a4"/>
<rect x="273" y="741" width="158" height="26" rx="2" fill="#3c80f0"/>
<rect x="124" y="747" width="14" height="13" rx="2" fill="#e8e8e8" stroke="#111"/><path d="M134 751H129Q127 751 127 753.500T129 756H133V754H130" fill="none" stroke="#111" stroke-width="1.400"/>
<text x="143" y="758" font-size="12" fill="#e8e8ff" textLength="114" lengthAdjust="spacingAndGlyphs">1 poly.max - 3ds max...</text>
<rect x="282" y="745" width="16" height="16" fill="#000"/><path d="M285 748L295 754L291 759L288 752Z" fill="#ccc"/>
<text x="302" y="757" font-size="12" fill="#fff" textLength="100" lengthAdjust="spacingAndGlyphs">Untitled - Rhinoceros</text>
<rect x="880" y="745" width="15" height="16" fill="#3467c8"/><text x="881" y="757" font-size="11" fill="#e0e8ff">ES</text>
<path d="M906 749H912V753H906ZM908 747H914V751M907 758H913L910 761Z" fill="none" stroke="#fff"/>
<circle cx="930" cy="754" r="9" fill="#e4f0ff"/><circle cx="930" cy="754" r="6.500" fill="#3a80e0"/><path d="M932 750L928 754L932 758" fill="none" stroke="#fff" stroke-width="2"/>
<path d="M943 760L950 746L958 750L954 760Z" fill="#7a5a30"/><rect x="942" y="758" width="4" height="4" fill="#3a3"/><path d="M947 753L955 748" stroke="#ddd"/>
<circle cx="968" cy="752" r="7" fill="#e8d890" stroke="#345"/><path d="M968 746L963 758H973Z" fill="#558" />
<text x="983" y="757" font-size="11.500" fill="#fff" textLength="28" lengthAdjust="spacingAndGlyphs">12:53</text>

<!-- floating Material window -->
<path d="M0 708H150Q160 708 160 718V738H0Z" fill="#0b58dc"/>
<path d="M134 708H150Q160 708 160 718V738H134Z" fill="#5a78d2"/>
<path d="M0 708H150Q155 708 157 711H0Z" fill="#2e7cf0"/>
<rect x="5" y="714" width="15" height="13" rx="2" fill="#e8e8e8" stroke="#111"/><path d="M15 718H10Q8 718 8 720.500T10 723H14V721H11" fill="none" stroke="#111" stroke-width="1.400"/>
<text x="25" y="729" font-size="13" font-weight="bold" fill="#fff" textLength="54" lengthAdjust="spacingAndGlyphs">Materi...</text>
<rect x="89" y="713" width="19" height="20" rx="3" fill="#2f6fe4" stroke="#fff"/><path d="M94 720H101V727H94ZM97 720V717H104V724H101" fill="none" stroke="#fff" stroke-width="1.300"/>
<rect x="112" y="713" width="19" height="20" rx="3" fill="#3c78dc" stroke="#6a98ea"/><rect x="116" y="718" width="11" height="11" fill="none" stroke="#8ab"/>
<rect x="135" y="713" width="19" height="20" rx="3" fill="#b8708a"/><path d="M140 718L149 728M149 718L140 728" stroke="#fff" stroke-width="2.400"/>
</svg>
</div></body></html>
